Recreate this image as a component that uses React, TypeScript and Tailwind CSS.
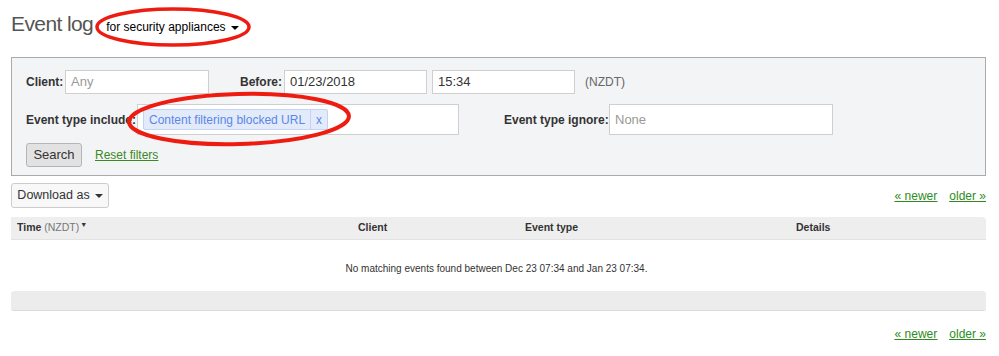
import React from "react";

function Caret() {
  return <span className="inline-block ml-[5px] align-middle border-x-[4px] border-x-transparent border-t-[4px] border-t-current" />;
}

function Field({ w, h = "h-[24px]", value, muted }: { w: string; h?: string; value: string; muted?: boolean }) {
  return (
    <div className={`${w} ${h} bg-white border border-[#cfcfcf] flex items-center px-[5px] text-[13px] ${muted ? "text-[#999]" : "text-[#333]"}`}>
      {value}
    </div>
  );
}

function Pager() {
  return (
    <div className="flex gap-[12px] text-[12px] text-[#2e8b1e] underline">
      <a>« newer</a>
      <a>older »</a>
    </div>
  );
}

export default function App() {
  return (
    <div className="relative w-[999px] h-[356px] bg-white font-['Liberation_Sans',Arial,sans-serif] text-[#333]">
      <div className="px-[11px] pt-[10px]">
        <div className="flex items-baseline h-[38px]">
          <h1 className="text-[21px] leading-[28px] text-[#555] tracking-[-0.6px]">Event log</h1>
          <span className="ml-[13px] text-[12px] text-black">
            for security appliances
            <Caret />
          </span>
        </div>

        <div className="mt-[9px] w-[975px] h-[119px] border border-[#aaaaaa] bg-[#f3f4f6] px-[14px] pt-[12px]">
          <div className="flex items-center h-[24px]">
            <span className="text-[12px] font-bold w-[39px]">Client:</span>
            <Field w="w-[144px]" value="Any" muted />
            <span className="text-[12px] font-bold ml-[31px] w-[44px]">Before:</span>
            <Field w="w-[143px]" value="01/23/2018" />
            <div className="ml-[5px]">
              <Field w="w-[143px]" value="15:34" />
            </div>
            <span className="ml-[10px] text-[12px] text-[#666]">(NZDT)</span>
          </div>

          <div className="flex items-center h-[31px] mt-[10px]">
            <span className="text-[12px] font-bold w-[111px]">Event type include:</span>
            <div className="w-[322px] h-[31px] bg-white border border-[#cfcfcf] flex items-center px-[5px]">
              <div className="flex items-center h-[21px] bg-[#e3ebfb] border border-[#c3d3f3] rounded-[2px] text-[12px] text-[#5a87e6]">
                <span className="px-[5px]">Content filtering blocked URL</span>
                <span className="px-[5px] border-l border-[#c3d3f3] h-full flex items-center">x</span>
              </div>
            </div>
            <span className="text-[12px] font-bold ml-[45px] w-[105px]">Event type ignore:</span>
            <Field w="w-[224px]" h="h-[31px]" value="None" muted />
          </div>

          <div className="flex items-center mt-[8px]">
            <button className="w-[56px] h-[24px] bg-[#e2e2e2] border border-[#b5b5b5] rounded-[3px] text-[13px] text-[#333]">
              Search
            </button>
            <a className="ml-[13px] text-[12px] text-[#3a8a1f] underline">Reset filters</a>
          </div>
        </div>

        <div className="flex items-center justify-between w-[975px] mt-[7px]">
          <button className="w-[98px] h-[25px] bg-[#f8f8f8] border border-[#cccccc] rounded-[3px] text-[12.5px] text-[#333]">
            Download as
            <Caret />
          </button>
          <div className="mt-[1px]">
            <Pager />
          </div>
        </div>

        <div className="w-[975px] mt-[9px]">
          <div className="grid grid-cols-[341px_167px_271px_1fr] items-center h-[23px] px-[6px] bg-[#eeeeee] border-b border-[#e2e2e2] rounded-tr-[4px] text-[10.5px] font-bold text-[#333]">
            <span>
              Time <span className="font-normal text-[#777]">(NZDT)</span>
              <span className="align-top text-[7px] ml-[1px]">▼</span>
            </span>
            <span>Client</span>
            <span>Event type</span>
            <span>Details</span>
          </div>
          <p className="text-center text-[10px] text-[#333] mt-[21px] pr-[4px]">
            No matching events found between Dec 23 07:34 and Jan 23 07:34.
          </p>
          <div className="h-[20px] mt-[15px] bg-[#ececec] border-b border-[#dadada] rounded-[3px]" />
        </div>

        <div className="flex justify-end w-[975px] mt-[14px]">
          <Pager />
        </div>
      </div>

      <svg className="absolute left-0 top-0 pointer-events-none" width="999" height="356">
        <ellipse cx="173" cy="27" rx="76" ry="18" fill="none" stroke="#ee1c10" strokeWidth="3.5" />
        <ellipse cx="239" cy="119" rx="110" ry="25" fill="none" stroke="#ee1c10" strokeWidth="4" transform="rotate(-1.5 239 119)" />
      </svg>
    </div>
  );
}
